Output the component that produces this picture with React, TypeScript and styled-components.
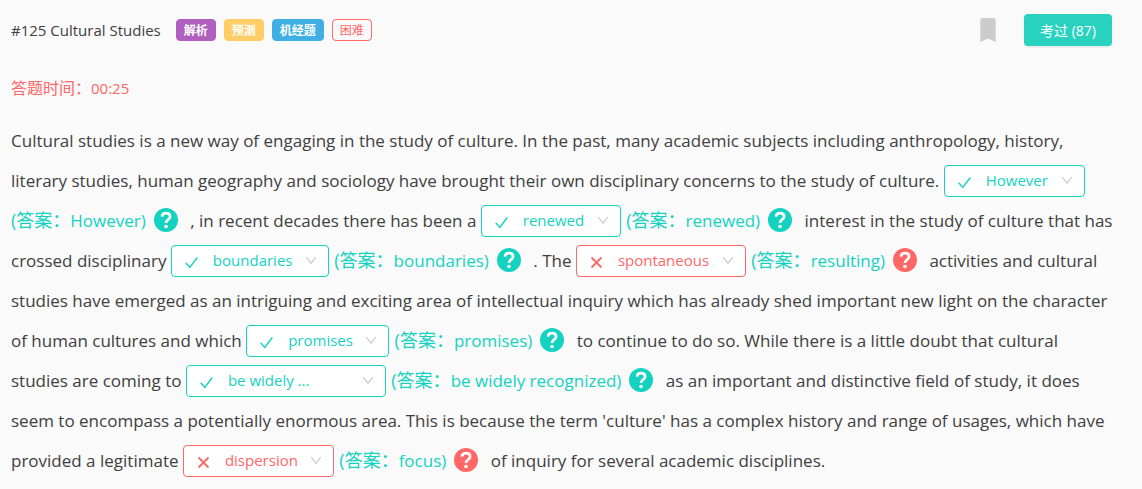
import React from "react";
import styled, { createGlobalStyle } from "styled-components";

const teal = "#13d2bf";
const red = "#ff6666";

const GlobalStyle = createGlobalStyle`
  * { box-sizing: border-box; }
  body {
    margin: 0;
    background: #fafafa;
    color: #404040;
    font-family: "Open Sans", "Noto Sans CJK SC", sans-serif;
  }
`;

const Page = styled.main`
  padding: 14px 26px 8px 11px;
`;

const Header = styled.header`
  display: flex;
  align-items: center;
  padding-right: 4px;
`;

const Title = styled.h1`
  margin: 0 15px 0 0;
  font-size: 15px;
  font-weight: 400;
  line-height: 32px;
`;

const Tags = styled.div`
  display: flex;
  gap: 8px;
  flex: 1;
`;

const Tag = styled.span<{ $color: string; $outline?: boolean }>`
  height: 22px;
  padding: 0 7px;
  border: 1px solid ${(p) => p.$color};
  border-radius: 4px;
  background: ${(p) => (p.$outline ? "transparent" : p.$color)};
  color: ${(p) => (p.$outline ? p.$color : "#fff")};
  font-size: 12px;
  font-weight: ${(p) => (p.$outline ? 400 : 700)};
  line-height: 22px;
`;

const BookmarkButton = styled.button`
  display: flex;
  margin: 0 28px 0 0;
  padding: 0;
  border: 0;
  background: none;
  color: #cccccc;
`;

const PassedButton = styled.button`
  height: 32px;
  padding: 0 16px;
  border: 0;
  border-radius: 4px;
  background: #29d2bf;
  box-shadow: 0 2px 0 rgba(0, 0, 0, 0.045);
  color: #fff;
  font: inherit;
  font-size: 14px;
`;

const Timer = styled.p`
  margin: 30px 0 21px;
  color: ${red};
  font-size: 16px;
  line-height: 24px;
`;

const Elapsed = styled.time`
  font-size: 15px;
`;

const Passage = styled.p`
  margin: 0;
  font-size: 17px;
  line-height: 40px;
`;

const Field = styled.span<{ $width: number; $color: string }>`
  position: relative;
  display: inline-block;
  width: ${(p) => p.$width}px;
  height: 32px;
  margin: 0 1px 2px 0;
  color: ${(p) => p.$color};
  line-height: 32px;
  vertical-align: middle;
`;

const Choice = styled.select`
  display: block;
  width: 100%;
  height: 32px;
  padding: 0 28px 2px 41px;
  border: 1px solid currentColor;
  border-radius: 4px;
  background: #fff;
  color: inherit;
  font: inherit;
  font-size: 15px;
  line-height: 24px;
  appearance: none;
`;

const Mark = styled.svg`
  position: absolute;
  top: 11px;
  left: 14px;
  pointer-events: none;
`;

const Chevron = styled.svg`
  position: absolute;
  top: 11px;
  right: 12px;
  color: #c4c4c4;
  pointer-events: none;
`;

const Answer = styled.span`
  color: ${teal};
  white-space: nowrap;
`;

const AnswerLabel = styled.span`
  font-size: 18px;
  line-height: 24px;
`;

const HelpButton = styled.button<{ $color: string }>`
  display: inline-flex;
  margin: 0 8px 4px 8px;
  padding: 0;
  border: 0;
  background: none;
  color: ${(p) => p.$color};
  vertical-align: middle;
`;

function HelpIcon() {
  return (
    <svg width="24" height="24" viewBox="0 0 24 24" fill="none" aria-hidden>
      <circle cx="12" cy="12" r="12" fill="currentColor" />
      <path
        d="M8 8.6C8.2 6.2 9.8 5.2 12 5.2c2.4 0 4.1 1.3 4.1 3.3 0 3.1-4.1 3-4.1 6.6"
        stroke="#fff"
        strokeWidth="2.7"
      />
      <circle cx="12" cy="18.5" r="1.8" fill="#fff" />
    </svg>
  );
}

type BlankProps = { value: string; answer: string; width: number; wrong?: boolean };

function Blank({ value, answer, width, wrong }: BlankProps) {
  const color = wrong ? red : teal;
  return (
    <>
      <Field $width={width} $color={color}>
        <Choice aria-label={`Blank: ${answer}`} defaultValue={value}>
          <option>{value}</option>
        </Choice>
        <Mark width="13" height="13" viewBox="0 0 13 13" fill="none" stroke="currentColor" aria-hidden>
          {wrong ? (
            <path d="M1.5 1.5l10 10M11.5 1.5l-10 10" strokeWidth="1.8" />
          ) : (
            <path d="M.7 6.8l4.1 4.6L12.3 1.5" strokeWidth="1.4" />
          )}
        </Mark>
        <Chevron width="12" height="9" viewBox="0 0 12 9" fill="none" stroke="currentColor" aria-hidden>
          <path d="M1.2 1l4.8 6.4L10.8 1" strokeWidth="1.1" />
        </Chevron>
      </Field>{" "}
      <Answer>
        <AnswerLabel>(答案：</AnswerLabel>
        {`${answer})`}
        <HelpButton type="button" $color={color} aria-label={`Explain ${answer}`}>
          <HelpIcon />
        </HelpButton>
      </Answer>{" "}
    </>
  );
}

export default function App() {
  return (
    <>
      <GlobalStyle />
      <Page>
        <Header>
          <Title>#125 Cultural Studies</Title>
          <Tags>
            <Tag $color="#b05fbf">解析</Tag>
            <Tag $color="#ffcc66">预测</Tag>
            <Tag $color="#40b0e4">机经题</Tag>
            <Tag $color={red} $outline>困难</Tag>
          </Tags>
          <BookmarkButton type="button" aria-label="Bookmark">
            <svg width="16" height="24" viewBox="0 0 16 24" fill="currentColor" aria-hidden>
              <path d="M2.5 0h11A2.2 2.2 0 0 1 15.7 2.2V24L8 20.6.3 24V2.2A2.2 2.2 0 0 1 2.5 0z" />
            </svg>
          </BookmarkButton>
          <PassedButton type="button">考过 (87)</PassedButton>
        </Header>
        <Timer>
          答题时间：<Elapsed>00:25</Elapsed>
        </Timer>
        <Passage>
          Cultural studies is a new way of engaging in the study of culture. In the past, many academic
          subjects including anthropology, history, literary studies, human geography and sociology have
          brought their own disciplinary concerns to the study of culture.{" "}
          <Blank value="However" answer="However" width={141} />, in recent decades there has been a{" "}
          <Blank value="renewed" answer="renewed" width={140} />
          interest in the study of culture that has crossed disciplinary{" "}
          <Blank value="boundaries" answer="boundaries" width={158} />. The{" "}
          <Blank value="spontaneous" answer="resulting" width={170} wrong />
          activities and cultural studies have emerged as an intriguing and exciting area of intellectual
          inquiry which has already shed important new light on the character of human cultures and which{" "}
          <Blank value="promises" answer="promises" width={143} />
          to continue to do so. While there is a little doubt that cultural studies are coming to{" "}
          <Blank value="be widely ..." answer="be widely recognized" width={200} />
          as an important and distinctive field of study, it does seem to encompass a potentially enormous
          area. This is because the term 'culture' has a complex history and range of usages, which have
          provided a legitimate <Blank value="dispersion" answer="focus" width={151} wrong />
          of inquiry for several academic disciplines.
        </Passage>
      </Page>
    </>
  );
}
